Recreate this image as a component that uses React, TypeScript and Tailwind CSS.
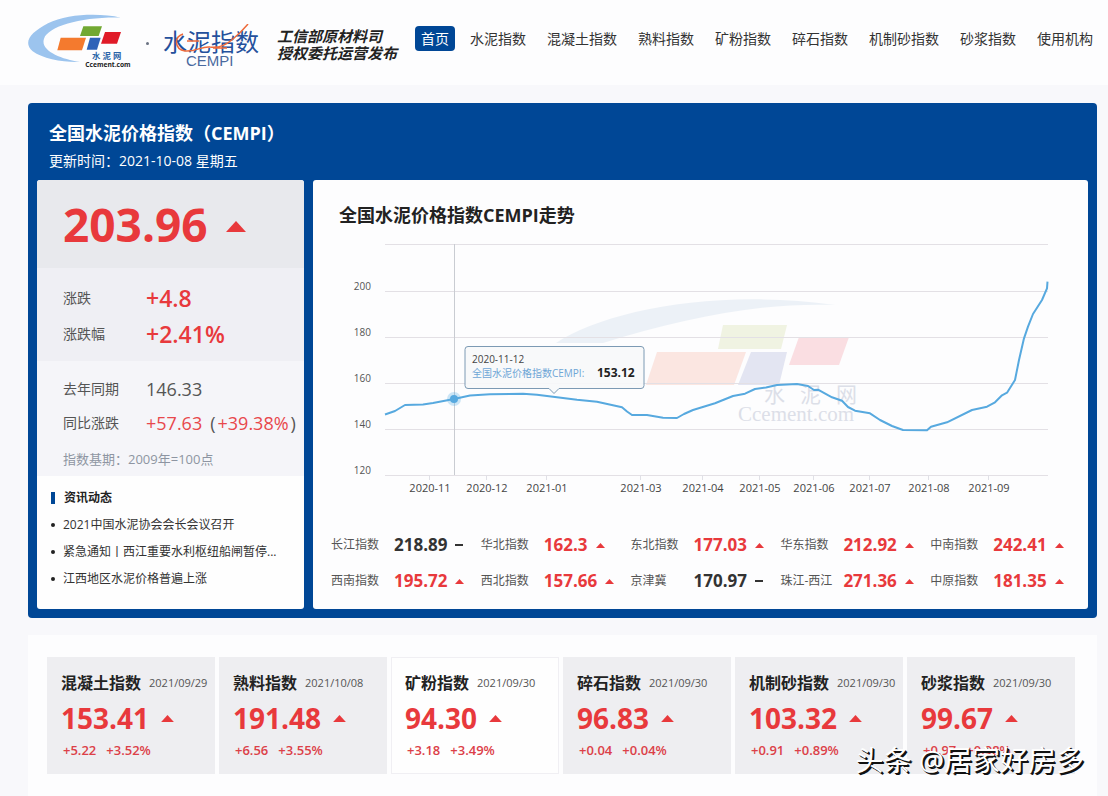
type Trend = "up" | "flat";

type Region = {
  name: string;
  value: string;
  trend: Trend;
};

type IndexCard = {
  name: string;
  date: string;
  value: string;
  change: string;
  rate: string;
  active?: boolean;
};

const NAV_ITEMS = [
  "首页",
  "水泥指数",
  "混凝土指数",
  "熟料指数",
  "矿粉指数",
  "碎石指数",
  "机制砂指数",
  "砂浆指数",
  "使用机构",
];

const NEWS = [
  "2021中国水泥协会会长会议召开",
  "紧急通知丨西江重要水利枢纽船闸暂停...",
  "江西地区水泥价格普遍上涨",
];

const REGIONS: Region[] = [
  { name: "长江指数", value: "218.89", trend: "flat" },
  { name: "华北指数", value: "162.3", trend: "up" },
  { name: "东北指数", value: "177.03", trend: "up" },
  { name: "华东指数", value: "212.92", trend: "up" },
  { name: "中南指数", value: "242.41", trend: "up" },
  { name: "西南指数", value: "195.72", trend: "up" },
  { name: "西北指数", value: "157.66", trend: "up" },
  { name: "京津冀", value: "170.97", trend: "flat" },
  { name: "珠江-西江", value: "271.36", trend: "up" },
  { name: "中原指数", value: "181.35", trend: "up" },
];

const CARDS: IndexCard[] = [
  { name: "混凝土指数", date: "2021/09/29", value: "153.41", change: "+5.22", rate: "+3.52%" },
  { name: "熟料指数", date: "2021/10/08", value: "191.48", change: "+6.56", rate: "+3.55%" },
  { name: "矿粉指数", date: "2021/09/30", value: "94.30", change: "+3.18", rate: "+3.49%", active: true },
  { name: "碎石指数", date: "2021/09/30", value: "96.83", change: "+0.04", rate: "+0.04%" },
  { name: "机制砂指数", date: "2021/09/30", value: "103.32", change: "+0.91", rate: "+0.89%" },
  { name: "砂浆指数", date: "2021/09/30", value: "99.67", change: "+0.97", rate: "+0.98%" },
];

const Y_TICKS = [
  { y: 8, label: "" },
  { y: 55, label: "200" },
  { y: 101, label: "180" },
  { y: 147, label: "160" },
  { y: 193, label: "140" },
  { y: 239, label: "120" },
];

const X_TICKS = [
  { x: 117, label: "2020-11" },
  { x: 174, label: "2020-12" },
  { x: 234, label: "2021-01" },
  { x: 328, label: "2021-03" },
  { x: 390, label: "2021-04" },
  { x: 447, label: "2021-05" },
  { x: 501, label: "2021-06" },
  { x: 557, label: "2021-07" },
  { x: 616, label: "2021-08" },
  { x: 676, label: "2021-09" },
];

const TREND_LINE =
  "72,178.5 82,175 92,169 110,168.5 120,167 141,163 157,159.5 177,158.3 210,157.7 224,158.7 242,161 264,163.7 284,165.7 309,171.3 314,175.5 319,179 334,179 350,181.7 364,182 371,178 380,174 402,167.3 420,160 432,157.7 442,153 453,151.5 464,149 484,148 495,150 501,154 505,153.7 519,161.3 529,164.7 535,171 542,174.7 557,177.3 567,184 579,190 590,194 614,194.3 618,190.7 634,186.3 659,174 674,170.7 682,166.3 689,159.3 694,156.7 702,144 706,124 711,102.3 715,90.7 720,78 729,64 734,52.3 734.5,45.7";

function Triangle({ className }: { className: string }) {
  return (
    <svg viewBox="0 0 20 11" className={className} aria-hidden="true">
      <path d="M0 11 10 0l10 11Z" fill="#e8393c" />
    </svg>
  );
}

function SiteLogo() {
  return (
    <svg viewBox="0 0 312 174" className="w-[104px] h-[58px] shrink-0" role="img" aria-label="水泥网">
      <path
        d="M278 17C216 3 118 5 60 34C6 62-16 92 14 118c30 22 92 34 142 32C98 140 36 116 48 80C62 42 164 14 278 17Z"
        fill="#9cc4ee"
      />
      <path d="M166 43h56l-10 29h-56Z" fill="#72a832" />
      <path d="M98 77h76l-12 38H88Z" fill="#f47a2e" />
      <path d="M186 77h32l-11 36h-31Z" fill="#2f62b8" />
      <path d="M231 60h48l-12 35h-48Z" fill="#e01b28" />
      <text x="192" y="142" fontSize="25" fontWeight="700" fill="#2a64a8">
        水 泥 网
      </text>
      <text x="172" y="165" fontSize="20" fontWeight="700" fill="#222">
        Ccement.com
      </text>
    </svg>
  );
}

function CempiLogo() {
  return (
    <svg viewBox="0 0 96 46" className="mt-3 w-24 h-[46px] shrink-0" role="img" aria-label="水泥指数 CEMPI">
      <text x="0" y="27" fontSize="24" fill="#24509c">
        水泥指数
      </text>
      <path
        d="M20 10C11 13 11 25 22 27c10 1 17-5 25-4c10 1 16-2 23-8c6-5 10-9 15-15M24 17h12M50 24h14"
        fill="none"
        stroke="#ee6a3a"
        strokeWidth="1.5"
      />
      <text x="23" y="42" fontSize="15" fontFamily="Liberation Sans" fill="#49699f">
        CEMPI
      </text>
    </svg>
  );
}

function Header() {
  return (
    <header className="flex items-start bg-[#fdfdfe] pt-3 pb-[15px] pl-7 pr-[9px]">
      <SiteLogo />
      <span className="mx-[14px] mt-[30px] size-[3px] shrink-0 rounded-full bg-gray-500" />
      <CempiLogo />
      <p className="ml-[18px] mt-4 shrink-0 text-[15px] leading-[17px] font-bold italic text-[#222]">
        工信部原材料司
        <br />
        授权委托运营发布
      </p>
      <nav className="ml-auto mt-[14px] flex gap-[9px] text-sm leading-[25px] whitespace-nowrap text-[#333]">
        {NAV_ITEMS.map((item, idx) => (
          <a
            key={item}
            href="#"
            className={idx === 0 ? "rounded-sm bg-[#004796] px-[6px] text-white" : "px-[6px]"}
          >
            {item}
          </a>
        ))}
      </nav>
    </header>
  );
}

function Summary() {
  return (
    <section className="flex w-[267px] shrink-0 flex-col overflow-hidden rounded-[3px] bg-[#fefefe]">
      <div className="flex h-[88px] items-center gap-[18px] bg-[#e8e9ed] px-[26px]">
        <strong className="text-[46px] leading-none font-bold text-[#e8393c]">203.96</strong>
        <Triangle className="mt-1 h-[11px] w-5" />
      </div>
      <dl className="grid grid-cols-[83px_1fr] items-center bg-[#efeff4] pt-3 pb-[9px] pl-[26px] text-sm leading-9 text-[#555]">
        <dt>涨跌</dt>
        <dd className="text-[23px] leading-9 font-semibold text-[#e8393c]">+4.8</dd>
        <dt>涨跌幅</dt>
        <dd className="text-[23px] leading-9 font-semibold text-[#e8393c]">+2.41%</dd>
      </dl>
      <div className="bg-[#f5f5f9] pt-[11px] pl-[26px] text-[#555]">
        <dl className="grid grid-cols-[83px_1fr] items-center text-sm leading-[34px] whitespace-nowrap">
          <dt>去年同期</dt>
          <dd className="text-lg leading-[34px]">146.33</dd>
          <dt>同比涨跌</dt>
          <dd className="flex gap-2 text-lg leading-[34px]">
            <span className="text-[#e8474c]">+57.63</span>
            <span>
              (<span className="px-[2px] text-[#e8474c]">+39.38%</span>)
            </span>
          </dd>
        </dl>
        <p className="mt-[2px] text-[13px] leading-[34px] text-[#8e95a2]">指数基期：2009年=100点</p>
      </div>
      <div className="pt-2 pb-[17px] pl-[14px] text-xs whitespace-nowrap text-[#333]">
        <h3 className="flex items-center gap-[9px] leading-[27px] font-bold text-[#222]">
          <span className="h-3 w-1 bg-[#004796]" />
          资讯动态
        </h3>
        <ul className="leading-[27px]">
          {NEWS.map((title) => (
            <li key={title} className="flex items-center gap-2">
              <span className="size-1 shrink-0 rounded-full bg-[#222]" />
              <a href="#">{title}</a>
            </li>
          ))}
        </ul>
      </div>
    </section>
  );
}

function TrendChart() {
  return (
    <svg viewBox="0 0 775 264" className="mt-[6px] w-full" role="img" aria-label="全国水泥价格指数CEMPI走势">
      <g opacity="0.13">
        <path d="M243 107C290 76 400 52 522 69C450 66 370 82 290 107Z" fill="#7fa6cc" />
        <path d="M410 89h64l-6 24h-63Z" fill="#9db32c" />
        <path d="M344 116h89l-12 33h-88Z" fill="#f0502a" />
        <path d="M438 116h36l-8 33h-41Z" fill="#3a4aa8" />
        <path d="M486 101h50l-10 28h-50Z" fill="#e8142c" />
      </g>
      <g fill="#dcdfe8">
        <text x="451" y="166" fontSize="21">水</text>
        <text x="487" y="166" fontSize="21">泥</text>
        <text x="523" y="166" fontSize="21">网</text>
        <text x="425" y="185" fontSize="21" fontFamily="Liberation Serif">
          Ccement.com
        </text>
      </g>

      {Y_TICKS.map((tick) => (
        <g key={tick.y}>
          <line x1="72" x2="735" y1={tick.y + 0.5} y2={tick.y + 0.5} stroke="#e3e0e5" />
          <text x="58" y={tick.y - 1} fontSize="10" textAnchor="end" fill="#555">
            {tick.label}
          </text>
        </g>
      ))}
      {X_TICKS.map((tick) => (
        <g key={tick.label}>
          <line x1={tick.x - 0.5} x2={tick.x - 0.5} y1="239" y2="244" stroke="#e0e0e6" />
          <text x={tick.x} y="256" fontSize="11" textAnchor="middle" fill="#444">
            {tick.label}
          </text>
        </g>
      ))}

      <line x1="141.5" x2="141.5" y1="8" y2="239" stroke="#c9ccd2" />
      <circle cx="141" cy="163" r="7" fill="#5aaee6" opacity="0.3" />
      <polyline points={TREND_LINE} fill="none" stroke="#57a9df" strokeWidth="2" strokeLinejoin="round" />
      <circle cx="141" cy="163" r="4" fill="#57a9df" />

      <path
        d="M155 110.5h173a3 3 0 0 1 3 3v36a3 3 0 0 1-3 3h-82l-5 5-5-5h-81a3 3 0 0 1-3-3v-36a3 3 0 0 1 3-3Z"
        fill="#f7f8fa"
        fillOpacity="0.9"
        stroke="#7c9ab4"
      />
      <text x="159" y="127" fontSize="10" fill="#444">
        2020-11-12
      </text>
      <text x="159" y="141" fontSize="10" fill="#6ea6d6">
        全国水泥价格指数CEMPI:
      </text>
      <text x="284" y="141" fontSize="12" fontWeight="700" fill="#222">
        153.12
      </text>
    </svg>
  );
}

function RegionList() {
  return (
    <dl className="mt-[27px] grid grid-cols-5 pr-2 pb-[10px] pl-[18px] leading-9 whitespace-nowrap">
      {REGIONS.map((region) => (
        <div key={region.name} className="flex items-center">
          <dt className="w-[63px] text-xs leading-9 text-[#555]">{region.name}</dt>
          <dd
            className={
              region.trend === "up"
                ? "flex items-center gap-2 text-[17px] leading-9 font-bold text-[#e8393c]"
                : "flex items-center gap-2 text-[17px] leading-9 font-bold text-[#333]"
            }
          >
            {region.value}
            {region.trend === "up" ? (
              <Triangle className="h-[5px] w-[9px]" />
            ) : (
              <span className="h-[2px] w-2 bg-[#333]" />
            )}
          </dd>
        </div>
      ))}
    </dl>
  );
}

function PriceIndexPanel() {
  return (
    <section className="rounded-sm bg-[#004796] px-[9px] pt-4 pb-[9px]">
      <div className="px-3 pb-[5px] text-white">
        <h1 className="text-lg leading-7 font-bold">全国水泥价格指数（CEMPI）</h1>
        <p className="text-sm leading-7">更新时间：2021-10-08 星期五</p>
      </div>
      <div className="flex gap-[9px]">
        <Summary />
        <section className="min-w-0 flex-1 rounded-[3px] bg-[#fdfdfe] pt-5">
          <h2 className="px-[26px] text-lg leading-[30px] font-bold text-[#222]">全国水泥价格指数CEMPI走势</h2>
          <TrendChart />
          <RegionList />
        </section>
      </div>
    </section>
  );
}

function IndexCards() {
  return (
    <section className="mt-[17px] grid grid-cols-6 gap-1 bg-[#fdfdfe] pt-[22px] pr-[22px] pb-[22px] pl-[19px] whitespace-nowrap">
      {CARDS.map((card) => (
        <article
          key={card.name}
          className={
            card.active
              ? "border border-[#f0eff3] bg-[#fefefe] px-[13px] py-[10px]"
              : "border border-[#eeeef1] bg-[#eeeef1] px-[13px] py-[10px]"
          }
        >
          <div className="flex items-center gap-2 leading-[30px]">
            <h3 className="font-bold text-[#222]">{card.name}</h3>
            <time className="text-[11px] text-[#555]">{card.date}</time>
          </div>
          <div className="flex items-center gap-3 leading-10 text-[#e8393c]">
            <strong className="text-[28px] font-bold">{card.value}</strong>
            <Triangle className="h-[7px] w-[13px]" />
          </div>
          <p className="flex gap-[10px] px-[2px] text-[13px] leading-[25px] font-semibold text-[#dc4048]">
            <span>{card.change}</span>
            <span>{card.rate}</span>
          </p>
        </article>
      ))}
    </section>
  );
}

export default function App() {
  return (
    <div className="relative min-h-screen bg-[#f8f8fb] font-['Open_Sans','Noto_Sans_CJK_SC',sans-serif]">
      <Header />
      <main className="pt-[18px] pr-[11px] pl-7">
        <PriceIndexPanel />
        <IndexCards />
      </main>
      <p className="absolute right-6 bottom-4 text-[28px] leading-10 text-white [text-shadow:1px_1px_0_#111,2px_2px_0_#111]">
        头条 @居家好房多
      </p>
    </div>
  );
}
